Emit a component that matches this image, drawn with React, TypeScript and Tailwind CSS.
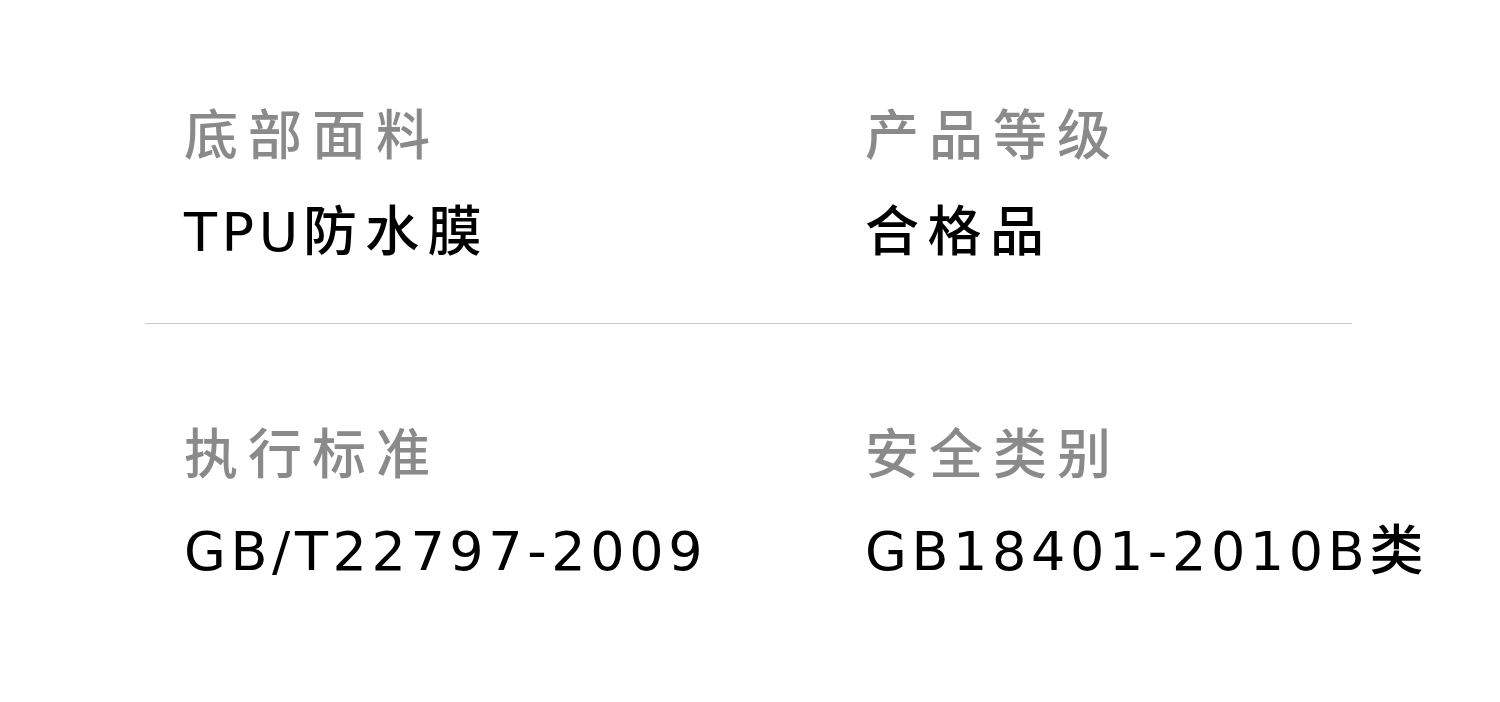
const rows = [
  [
    { label: "底部面料", value: "TPU防水膜" },
    { label: "产品等级", value: "合格品" },
  ],
  [
    { label: "执行标准", value: "GB/T22797-2009" },
    { label: "安全类别", value: "GB18401-2010B类" },
  ],
]

// Latin runs and CJK runs are spaced differently in the reference
function Value({ text }: { text: string }) {
  const parts = text.match(/[\u4e00-\u9fff]+|[^\u4e00-\u9fff]+/g) ?? []
  return (
    <p className="mt-[40px] h-[56px] text-[54px] leading-[56px] text-black">
      {parts.map((p, i) =>
        /[\u4e00-\u9fff]/.test(p) ? (
          <span key={i} className="tracking-[8.5px] font-medium">{p}</span>
        ) : (
          <span key={i} className="tracking-[4.6px]" style={{ fontFamily: '"DejaVu Sans", sans-serif' }}>{p}</span>
        )
      )}
    </p>
  )
}

function Item({ label, value }: { label: string; value: string }) {
  return (
    <div className="flex flex-col whitespace-nowrap">
      <p className="text-[54px] leading-[56px] tracking-[10px] font-medium text-[#8a8a8a]">{label}</p>
      <Value text={value} />
    </div>
  )
}

export default function App() {
  return (
    <div
      className="w-full h-[702px] bg-white overflow-hidden"
      style={{ fontFamily: '"Noto Sans CJK SC", "Noto Sans", sans-serif' }}
    >
      <div className="ml-[145px] w-[1207px] pt-[104px]">
        <div className="grid grid-cols-[681px_1fr] pl-[39px]">
          {rows[0].map((it) => (
            <Item key={it.label} {...it} />
          ))}
        </div>
        <div className="mt-[67px] mb-[99px] border-t border-[#c8c8c8]" />
        <div className="grid grid-cols-[681px_1fr] pl-[39px]">
          {rows[1].map((it) => (
            <Item key={it.label} {...it} />
          ))}
        </div>
      </div>
    </div>
  )
}
